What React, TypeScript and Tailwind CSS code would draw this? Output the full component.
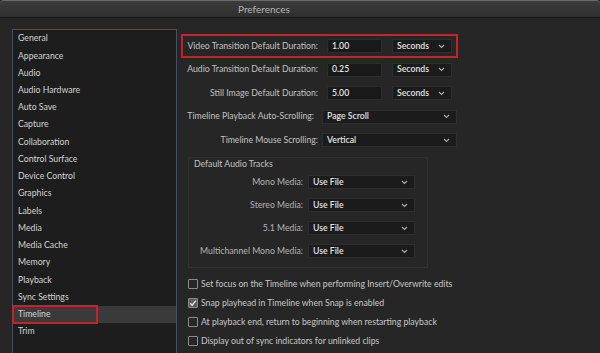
import React from "react";

const items = [
  "General",
  "Appearance",
  "Audio",
  "Audio Hardware",
  "Auto Save",
  "Capture",
  "Collaboration",
  "Control Surface",
  "Device Control",
  "Graphics",
  "Labels",
  "Media",
  "Media Cache",
  "Memory",
  "Playback",
  "Sync Settings",
  "Timeline",
  "Trim",
];

function Chevron() {
  return (
    <svg width="7" height="5" viewBox="0 0 7 5" className="shrink-0">
      <polyline points="1,1 3.5,3.5 6,1" fill="none" stroke="#a8a8a8" strokeWidth="1.2" />
    </svg>
  );
}

function Select({ value, w }: { value: string; w: string }) {
  return (
    <div className={`${w} h-[14px] bg-[#1b1b1b] border border-[#2e2e2e] flex items-center justify-between pl-[4px] pr-[6px] text-[#e2e2e2] font-semibold`}>
      <span>{value}</span>
      <Chevron />
    </div>
  );
}

function Input({ value }: { value: string }) {
  return (
    <div className="w-[55px] h-[14px] bg-[#191919] border border-[#2c2c2c] flex items-center pl-[4px] text-[#e2e2e2] font-semibold">
      {value}
    </div>
  );
}

function Check({ checked, label }: { checked?: boolean; label: string }) {
  return (
    <div className="h-[19px] flex items-center ml-[7px]">
      <div className={`w-[10px] h-[10px] border border-[#8c8c8c] rounded-[1px] flex items-center justify-center ${checked ? "bg-[#5c5c5c]" : ""}`}>
        {checked && (
          <svg width="8" height="8" viewBox="0 0 8 8">
            <polyline points="1.2,4.2 3.2,6.2 6.8,1.6" fill="none" stroke="#e8e8e8" strokeWidth="1.4" />
          </svg>
        )}
      </div>
      <span className="ml-[3px] text-[#c6c6c6]">{label}</span>
    </div>
  );
}

export default function App() {
  return (
    <div
      className="w-[600px] h-[353px] overflow-hidden bg-[#262626] text-[8.7px] leading-none whitespace-nowrap flex flex-col"
      style={{ fontFamily: "Lato, 'Open Sans', sans-serif" }}
    >
      <div className="h-[18px] shrink-0 border-t border-[#6a6a6a] border-b border-b-[#151515] bg-gradient-to-b from-[#3c3c3c] to-[#2f2f2f] flex items-center pl-[238px] rounded-t-[4px]">
        <span className="text-[#b4b4b4] text-[10px]">Preferences</span>
      </div>
      <div className="flex pt-[11px] pl-[12px]">
        <div className="w-[165px] h-[340px] shrink-0 border border-[#3a5475] bg-[#1d1d1d] flex flex-col">
          {items.map((it) => (
            <div
              key={it}
              className={`relative h-[17.24px] shrink-0 flex items-center pl-[5px] text-[#d2d2d2] ${it === "Timeline" ? "bg-[#3a3a3a]" : ""}`}
            >
              {it}
              {it === "Timeline" && (
                <div className="absolute left-[-1px] top-[-1px] w-[86px] h-[19px] border-2 border-[#c9212b]" />
              )}
            </div>
          ))}
        </div>
        <div className="ml-[4px] flex flex-col">
          <div className="mt-[5px] h-[24px] w-[277px] border-2 border-[#c9212b] flex items-center">
            <div className="w-[135px] text-right text-[#c2c2c2]">Video Transition Default Duration:</div>
            <div className="ml-[9px]"><Input value="1.00" /></div>
            <div className="ml-[10px]"><Select value="Seconds" w="w-[60px]" /></div>
          </div>
          <div className="h-[23.5px] flex items-center">
            <div className="w-[137px] text-right text-[#c2c2c2]">Audio Transition Default Duration:</div>
            <div className="ml-[9px]"><Input value="0.25" /></div>
            <div className="ml-[10px]"><Select value="Seconds" w="w-[60px]" /></div>
          </div>
          <div className="h-[23.5px] flex items-center">
            <div className="w-[137px] text-right text-[#c2c2c2]">Still Image Default Duration:</div>
            <div className="ml-[9px]"><Input value="5.00" /></div>
            <div className="ml-[10px]"><Select value="Seconds" w="w-[60px]" /></div>
          </div>
          <div className="h-[23.5px] flex items-center">
            <div className="w-[133px] text-right text-[#c2c2c2]">Timeline Playback Auto-Scrolling:</div>
            <div className="ml-[8px]"><Select value="Page Scroll" w="w-[135px]" /></div>
          </div>
          <div className="h-[23.5px] flex items-center">
            <div className="w-[137px] text-right text-[#c2c2c2]">Timeline Mouse Scrolling:</div>
            <div className="ml-[4px]"><Select value="Vertical" w="w-[135px]" /></div>
          </div>
          <div className="mt-[5px] ml-[7px] w-[240px] h-[111px] border border-[#303030] flex flex-col">
            <div className="h-[12.5px] flex items-center pl-[5px] text-[#c2c2c2]">Default Audio Tracks</div>
            {["Mono Media:", "Stereo Media:", "5.1 Media:", "Multichannel Mono Media:"].map((l) => (
              <div key={l} className="h-[23px] flex items-center">
                <div className="w-[114px] text-right text-[#b4b4b4]">{l}</div>
                <div className="ml-[5px]"><Select value="Use File" w="w-[107px]" /></div>
              </div>
            ))}
          </div>
          <div className="mt-[6.5px] flex flex-col">
            <Check label="Set focus on the Timeline when performing Insert/Overwrite edits" />
            <Check checked label="Snap playhead in Timeline when Snap is enabled" />
            <Check label="At playback end, return to beginning when restarting playback" />
            <Check label="Display out of sync indicators for unlinked clips" />
          </div>
        </div>
      </div>
    </div>
  );
}
